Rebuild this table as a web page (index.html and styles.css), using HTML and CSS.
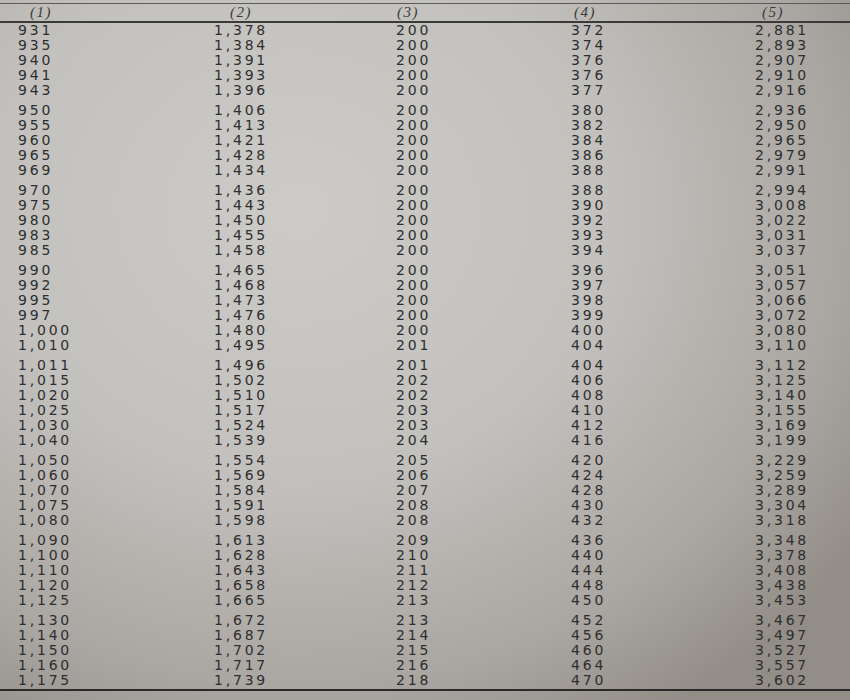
FILE: index.html
```html
<!DOCTYPE html>
<html>
<head>
<meta charset="utf-8">
<link rel="stylesheet" href="styles.css">
</head>
<body>
<div class="sheet">
  <div class="rule rule-top"></div>
  <div class="row head">
    <span class="h h1">(1)</span><span class="h h2">(2)</span><span class="h h3">(3)</span><span class="h h4">(4)</span><span class="h h5">(5)</span>
  </div>
  <div class="rule rule-mid"></div>

  <div class="group">
    <div class="row"><span>931</span><span>1,378</span><span>200</span><span>372</span><span>2,881</span></div>
    <div class="row"><span>935</span><span>1,384</span><span>200</span><span>374</span><span>2,893</span></div>
    <div class="row"><span>940</span><span>1,391</span><span>200</span><span>376</span><span>2,907</span></div>
    <div class="row"><span>941</span><span>1,393</span><span>200</span><span>376</span><span>2,910</span></div>
    <div class="row"><span>943</span><span>1,396</span><span>200</span><span>377</span><span>2,916</span></div>
  </div>
  <div class="group">
    <div class="row"><span>950</span><span>1,406</span><span>200</span><span>380</span><span>2,936</span></div>
    <div class="row"><span>955</span><span>1,413</span><span>200</span><span>382</span><span>2,950</span></div>
    <div class="row"><span>960</span><span>1,421</span><span>200</span><span>384</span><span>2,965</span></div>
    <div class="row"><span>965</span><span>1,428</span><span>200</span><span>386</span><span>2,979</span></div>
    <div class="row"><span>969</span><span>1,434</span><span>200</span><span>388</span><span>2,991</span></div>
  </div>
  <div class="group">
    <div class="row"><span>970</span><span>1,436</span><span>200</span><span>388</span><span>2,994</span></div>
    <div class="row"><span>975</span><span>1,443</span><span>200</span><span>390</span><span>3,008</span></div>
    <div class="row"><span>980</span><span>1,450</span><span>200</span><span>392</span><span>3,022</span></div>
    <div class="row"><span>983</span><span>1,455</span><span>200</span><span>393</span><span>3,031</span></div>
    <div class="row"><span>985</span><span>1,458</span><span>200</span><span>394</span><span>3,037</span></div>
  </div>
  <div class="group">
    <div class="row"><span>990</span><span>1,465</span><span>200</span><span>396</span><span>3,051</span></div>
    <div class="row"><span>992</span><span>1,468</span><span>200</span><span>397</span><span>3,057</span></div>
    <div class="row"><span>995</span><span>1,473</span><span>200</span><span>398</span><span>3,066</span></div>
    <div class="row"><span>997</span><span>1,476</span><span>200</span><span>399</span><span>3,072</span></div>
    <div class="row"><span>1,000</span><span>1,480</span><span>200</span><span>400</span><span>3,080</span></div>
    <div class="row"><span>1,010</span><span>1,495</span><span>201</span><span>404</span><span>3,110</span></div>
  </div>
  <div class="group">
    <div class="row"><span>1,011</span><span>1,496</span><span>201</span><span>404</span><span>3,112</span></div>
    <div class="row"><span>1,015</span><span>1,502</span><span>202</span><span>406</span><span>3,125</span></div>
    <div class="row"><span>1,020</span><span>1,510</span><span>202</span><span>408</span><span>3,140</span></div>
    <div class="row"><span>1,025</span><span>1,517</span><span>203</span><span>410</span><span>3,155</span></div>
    <div class="row"><span>1,030</span><span>1,524</span><span>203</span><span>412</span><span>3,169</span></div>
    <div class="row"><span>1,040</span><span>1,539</span><span>204</span><span>416</span><span>3,199</span></div>
  </div>
  <div class="group">
    <div class="row"><span>1,050</span><span>1,554</span><span>205</span><span>420</span><span>3,229</span></div>
    <div class="row"><span>1,060</span><span>1,569</span><span>206</span><span>424</span><span>3,259</span></div>
    <div class="row"><span>1,070</span><span>1,584</span><span>207</span><span>428</span><span>3,289</span></div>
    <div class="row"><span>1,075</span><span>1,591</span><span>208</span><span>430</span><span>3,304</span></div>
    <div class="row"><span>1,080</span><span>1,598</span><span>208</span><span>432</span><span>3,318</span></div>
  </div>
  <div class="group">
    <div class="row"><span>1,090</span><span>1,613</span><span>209</span><span>436</span><span>3,348</span></div>
    <div class="row"><span>1,100</span><span>1,628</span><span>210</span><span>440</span><span>3,378</span></div>
    <div class="row"><span>1,110</span><span>1,643</span><span>211</span><span>444</span><span>3,408</span></div>
    <div class="row"><span>1,120</span><span>1,658</span><span>212</span><span>448</span><span>3,438</span></div>
    <div class="row"><span>1,125</span><span>1,665</span><span>213</span><span>450</span><span>3,453</span></div>
  </div>
  <div class="group">
    <div class="row"><span>1,130</span><span>1,672</span><span>213</span><span>452</span><span>3,467</span></div>
    <div class="row"><span>1,140</span><span>1,687</span><span>214</span><span>456</span><span>3,497</span></div>
    <div class="row"><span>1,150</span><span>1,702</span><span>215</span><span>460</span><span>3,527</span></div>
    <div class="row"><span>1,160</span><span>1,717</span><span>216</span><span>464</span><span>3,557</span></div>
    <div class="row"><span>1,175</span><span>1,739</span><span>218</span><span>470</span><span>3,602</span></div>
  </div>

  <div class="rule rule-bottom"></div>
</div>
</body>
</html>
```

FILE: styles.css
```css
html, body {
  margin: 0;
  padding: 0;
}
body {
  width: 850px;
  height: 700px;
  overflow: hidden;
  background: radial-gradient(ellipse 80% 85% at 35% 30%, #cccbc8 0%, #c3c1be 45%, #aaa6a1 80%, #928d87 100%);
}
.sheet {
  padding-top: 3px;
  color: #2e2e2e;
  font-family: "DejaVu Sans", sans-serif;
  font-size: 14px;
}
.rule {
  background: #3a3a3a;
}
.rule-top {
  height: 1px;
  background: #5a5a5a;
}
.rule-mid {
  height: 2px;
}
.rule-bottom {
  height: 2px;
  margin-top: 1px;
  background: #2a2a2a;
}
.row {
  display: grid;
  grid-template-columns: 196px 182px 175px 184px 1fr;
  padding-left: 18px;
  line-height: 15px;
  letter-spacing: 2.8px;
  white-space: nowrap;
}
.group + .group {
  margin-top: 5px;
}
.head {
  height: 17px;
  line-height: 17px;
  font-family: "Liberation Serif", serif;
  font-style: italic;
  font-size: 15px;
  letter-spacing: 1.5px;
  color: #3a3a3a;
}
.h1 { padding-left: 12px; }
.h2 { padding-left: 16px; }
.h3 { padding-left: 1px; }
.h4 { padding-left: 3px; }
.h5 { padding-left: 7px; }
```
